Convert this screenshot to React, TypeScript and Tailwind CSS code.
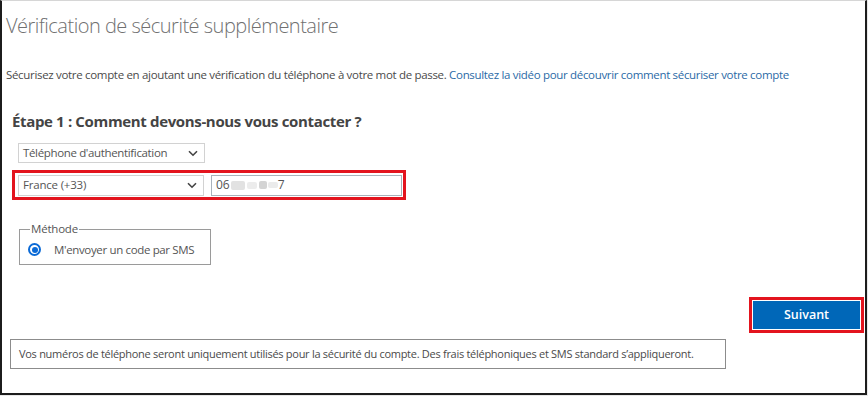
import React from "react";

function Chevron() {
  return (
    <svg width="10" height="7" viewBox="0 0 10 7" className="shrink-0">
      <path d="M1 1.2 L5 5.2 L9 1.2" fill="none" stroke="#444" strokeWidth="1.6" />
    </svg>
  );
}

export default function App() {
  return (
    <div className="w-[868px] h-[396px] bg-[#e8e8e8] font-['Open_Sans',sans-serif]">
      <div className="w-[867px] h-[395px] bg-white border-t border-t-[#d6d6d6] border-l-2 border-l-[#1c1c1c] border-r-2 border-r-[#1c1c1c] border-b-2 border-b-[#1c1c1c] flex flex-col">
        <h1 className="mt-[9px] ml-[4px] text-[20px] font-light leading-[32px] text-[#707070] tracking-[-0.5px] whitespace-nowrap">
          Vérification de sécurité supplémentaire
        </h1>
        <p className="mt-[25px] ml-[4px] text-[11.5px] leading-[16px] text-[#4a4a4a] tracking-[-0.32px] whitespace-nowrap">
          Sécurisez votre compte en ajoutant une vérification du téléphone à votre mot de passe.{" "}
          <span className="text-[#2b6aa6]">Consultez la vidéo pour découvrir comment sécuriser votre compte</span>
        </p>
        <h2 className="mt-[28px] ml-[10px] text-[15px] font-bold leading-[20px] text-[#444444] tracking-[-0.35px] whitespace-nowrap">
          Étape 1 : Comment devons-nous vous contacter ?
        </h2>
        <div className="mt-[12px] ml-[16px] w-[187px] h-[20px] border border-[#d2d2d2] flex items-center justify-between pl-[4px] pr-[6px]">
          <span className="text-[11.5px] text-[#555] tracking-[-0.35px] whitespace-nowrap">Téléphone d'authentification</span>
          <Chevron />
        </div>
        <div className="mt-[7px] ml-[10px] w-[394px] h-[30px] border-[3px] border-[#e3141e] flex items-center pl-[3px] gap-[7px]">
          <div className="w-[186px] h-[21px] border border-[#d2d2d2] flex items-center justify-between pl-[4px] pr-[6px]">
            <span className="text-[11.5px] text-[#555] tracking-[-0.2px] whitespace-nowrap">France (+33)</span>
            <Chevron />
          </div>
          <div className="w-[191px] h-[21px] border border-[#a9b2bb] flex items-center pl-[4px]">
            <span className="text-[12px] text-[#555]">06</span>
            <span className="inline-block w-[14px] h-[9px] bg-[#e2e2e2] ml-[1px] rounded-[2px]" />
            <span className="inline-block w-[10px] h-[7px] bg-[#ececec] ml-[2px] rounded-[2px]" />
            <span className="inline-block w-[8px] h-[8px] bg-[#d4d4d4] ml-[2px] rounded-[2px]" />
            <span className="inline-block w-[10px] h-[6px] bg-[#ebebeb] ml-[1px] rounded-[2px]" />
            <span className="text-[12px] text-[#555]">7</span>
          </div>
        </div>
        <fieldset className="mt-[22px] ml-[17px] w-[192px] h-[43px] border border-[#9a9a9a] pl-[8px] pr-[4px] pb-[4px]">
          <legend className="text-[11.5px] text-[#555] px-[1px] ml-[2px] leading-[14px] tracking-[-0.2px]">Méthode</legend>
          <div className="flex items-center mt-[5px]">
            <span className="w-[13px] h-[13px] rounded-full border-[2px] border-[#0b6ad6] flex items-center justify-center shrink-0">
              <span className="w-[6px] h-[6px] rounded-full bg-[#0b6ad6]" />
            </span>
            <span className="ml-[13px] text-[11.5px] text-[#555] tracking-[-0.35px] whitespace-nowrap">M'envoyer un code par SMS</span>
          </div>
        </fieldset>
        <div className="mt-[32px] flex justify-end pr-[1px]">
          <div className="w-[115px] h-[36px] border-[3px] border-[#e3141e] p-[1px]">
            <div className="w-full h-full bg-[#0067b8] flex items-center justify-center text-white text-[12.5px] font-semibold">
              Suivant
            </div>
          </div>
        </div>
        <div className="mt-[6px] ml-[8px] w-[716px] h-[30px] border border-[#8c8c8c] flex items-center pl-[8px]">
          <span className="text-[11px] text-[#4a4a4a] tracking-[-0.28px] whitespace-nowrap">
            Vos numéros de téléphone seront uniquement utilisés pour la sécurité du compte. Des frais téléphoniques et SMS standard s’appliqueront.
          </span>
        </div>
      </div>
    </div>
  );
}
